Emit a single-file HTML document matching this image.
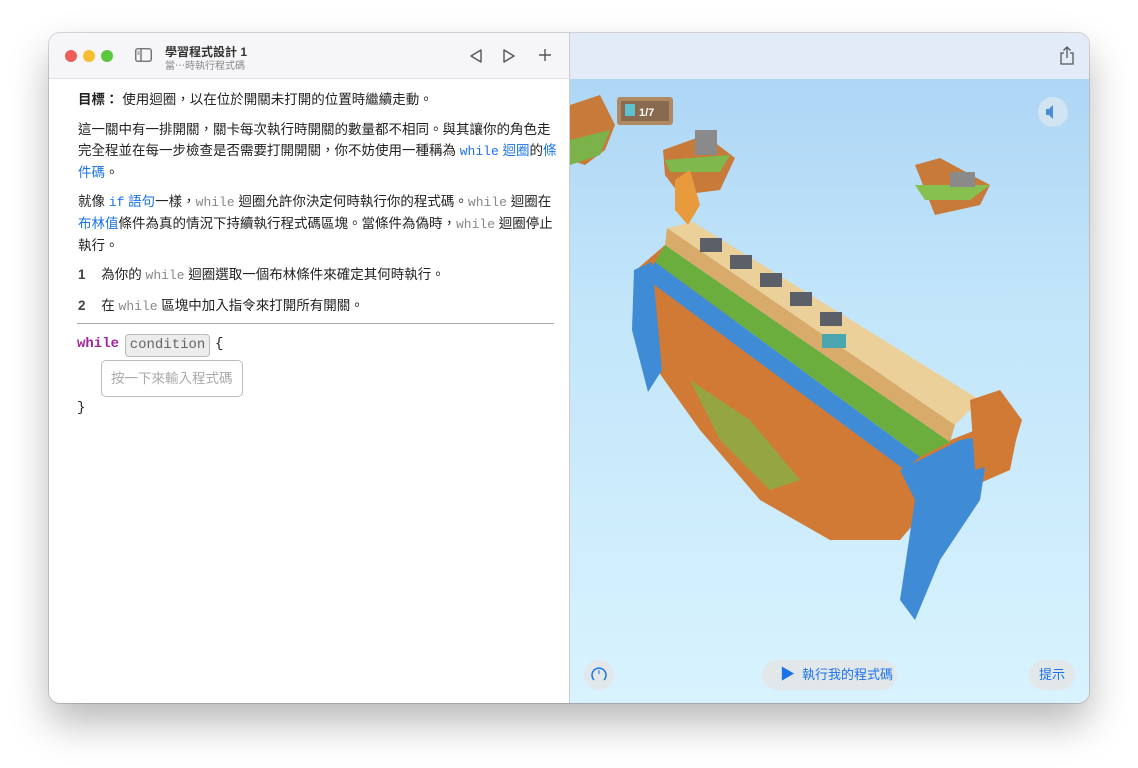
<!DOCTYPE html>
<html><head><meta charset="utf-8"><style>
*{margin:0;padding:0;box-sizing:border-box}
body{width:1138px;height:768px;background:#fff;position:relative;overflow:hidden;font-family:"Liberation Sans","Noto Sans CJK TC",sans-serif}
.win{position:absolute;left:49px;top:33px;width:1040px;height:670px;border-radius:11px;overflow:hidden;box-shadow:0 20px 40px rgba(0,0,0,.28),0 0 0 1px rgba(0,0,0,.15);background:#fff}
.tb{position:absolute;left:0;top:0;width:520px;height:46px;background:#f6f6f8;border-bottom:1px solid #e2e2e2}
.dot{position:absolute;top:17px;width:12px;height:12px;border-radius:50%}
.left{position:absolute;left:0;top:46px;width:520px;height:624px;background:#fff;font-size:13.5px;color:#222}
p{position:absolute;left:29px;width:490px;line-height:21px;white-space:nowrap}
.m{font-family:"Liberation Mono",monospace;color:#888;font-size:13px}
.b{color:#1a73e8}
.bm{font-family:"Liberation Mono",monospace;color:#1a73e8;font-size:13px}
.right{position:absolute;left:520px;top:0;width:520px;height:670px;background:linear-gradient(#a9d3f4 0%,#c2e5fa 40%,#d8f3fe 100%);border-left:1px solid #ccc}
.rtb{position:absolute;left:0;top:0;width:520px;height:46px;background:#e4ebf8}
.pill{position:absolute;background:#e2e7ea;border-radius:16px;color:#1a73e8;font-size:13px;text-align:center}
</style></head><body>
<div class="win">
<div class="tb">
<div class="dot" style="left:16px;background:#ee5f57"></div>
<div class="dot" style="left:34px;background:#f5bd2f"></div>
<div class="dot" style="left:52px;background:#5ec53e"></div>
<svg style="position:absolute;left:86px;top:15px" width="17" height="14"><rect x=".75" y=".75" width="15.5" height="12.5" rx="2" fill="none" stroke="#666" stroke-width="1.3"/><line x1="6" y1="1" x2="6" y2="13" stroke="#666" stroke-width="1.3"/><line x1="2.5" y1="4" x2="4.5" y2="4" stroke="#666"/><line x1="2.5" y1="6" x2="4.5" y2="6" stroke="#666"/></svg>
<div style="position:absolute;left:116px;top:10px;font-size:12px;font-weight:bold;color:#333">學習程式設計 1</div>
<div style="position:absolute;left:116px;top:24px;font-size:10px;color:#888">當⋯時執行程式碼</div>
<svg style="position:absolute;left:420px;top:15px" width="14" height="16"><path d="M12 2L2 8l10 6z" fill="none" stroke="#555" stroke-width="1.4" stroke-linejoin="round"/></svg>
<svg style="position:absolute;left:453px;top:15px" width="14" height="16"><path d="M2 2l10 6-10 6z" fill="none" stroke="#555" stroke-width="1.4" stroke-linejoin="round"/></svg>
<svg style="position:absolute;left:489px;top:15px" width="14" height="14"><path d="M7 1v12M1 7h12" stroke="#555" stroke-width="1.4"/></svg>
</div>
<div class="left">
<p style="top:10px"><b>目標：</b> 使用迴圈，以在位於開關未打開的位置時繼續走動。</p>
<p style="top:40px">這一關中有一排開關，關卡每次執行時開關的數量都不相同。與其讓你的角色走<br>完全程並在每一步檢查是否需要打開開關，你不妨使用一種稱為 <span class="bm">while</span><span class="b"> 迴圈</span>的<span class="b">條</span><br><span class="b">件碼</span>。</p>
<p style="top:112px">就像 <span class="bm">if</span><span class="b"> 語句</span>一樣，<span class="m">while</span> 迴圈允許你決定何時執行你的程式碼。<span class="m">while</span> 迴圈在<br><span class="b">布林值</span>條件為真的情況下持續執行程式碼區塊。當條件為偽時，<span class="m">while</span> 迴圈停止<br>執行。</p>
<p style="top:185px"><b style="color:#444;margin-right:12px">1</b> 為你的 <span class="m">while</span> 迴圈選取一個布林條件來確定其何時執行。</p>
<p style="top:216px"><b style="color:#444;margin-right:12px">2</b> 在 <span class="m">while</span> 區塊中加入指令來打開所有開關。</p>
<div style="position:absolute;left:28px;top:244px;width:477px;height:1px;background:#aaa"></div>
<div style="position:absolute;left:28px;top:257px;font-family:'Liberation Mono',monospace;font-size:14px;font-weight:bold;color:#a3269c">while</div>
<div style="position:absolute;left:76px;top:255px;width:85px;height:23px;border:1px solid #bbb;border-radius:4px;background:#ececec;font-family:'Liberation Mono',monospace;font-size:14px;color:#666;text-align:center;line-height:21px">condition</div>
<div style="position:absolute;left:166px;top:257px;font-family:'Liberation Mono',monospace;font-size:14px">{</div>
<div style="position:absolute;left:52px;top:281px;width:142px;height:37px;border:1px solid #bbb;border-radius:5px;font-size:13.5px;color:#aaa;line-height:35px;padding-left:9px">按一下來輸入程式碼</div>
<div style="position:absolute;left:28px;top:321px;font-family:'Liberation Mono',monospace;font-size:14px">}</div>
</div>
<div class="right">
<div class="rtb"></div>
<svg style="position:absolute;left:489px;top:13px" width="16" height="19"><path d="M8 1v11M4.5 4.5L8 1l3.5 3.5M5 7H2v11h12V7h-3" fill="none" stroke="#555" stroke-width="1.3"/></svg>
<svg style="position:absolute;left:0;top:46px" width="520" height="580" viewBox="0 79 520 580">
<path d="M0 105L30 95L45 125L35 150L15 165L0 160z" fill="#c87a3a"/>
<path d="M0 140L40 130L30 155L0 165z" fill="#7bb24a"/>
<rect x="47" y="97" width="56" height="28" rx="3" fill="#b08862"/>
<rect x="51" y="101" width="48" height="20" fill="#8a6a4e"/>
<rect x="55" y="104" width="10" height="12" fill="#5fc0d0"/>
<text x="69" y="116" font-size="11" fill="#fff" font-family="Liberation Sans" font-weight="bold">1/7</text>
<path d="M93 150L135 135L165 158L150 190L110 195L95 175z" fill="#c87a3a"/>
<path d="M95 160L160 155L150 172L100 172z" fill="#7fb84c"/>
<rect x="125" y="130" width="22" height="25" fill="#8a8a8a"/>
<path d="M345 165L370 158L420 185L410 205L365 215z" fill="#c87a3a"/>
<path d="M345 185L420 185L400 200L355 200z" fill="#88c050"/>
<rect x="380" y="172" width="25" height="15" fill="#8a8a8a"/>
<path d="M66 270L95 245L220 380L330 460L431 420L450 420L440 470L360 505L330 540L260 540L190 500L130 430L80 360L70 300z" fill="#d17a35"/>
<path d="M97 228L123 222L410 400L385 425z" fill="#ecd09a"/>
<path d="M97 228L385 425L380 442L95 245z" fill="#d9ab6b"/>
<path d="M95 245L380 442L350 457L85 262z" fill="#6cae3e"/>
<path d="M85 262L350 457L335 470L75 278z" fill="#3f8bd6"/>
<path d="M64 270L82 262L92 370L78 392L62 330z" fill="#3f8bd6"/>
<path d="M120 380L180 420L230 480L200 490L150 440z" fill="#7cb848" opacity=".7"/>
<path d="M330 470L390 440L420 435L410 500L370 560L345 620L330 600L345 500z" fill="#3f8bd6"/>
<path d="M400 400L430 390L452 420L440 460L405 470z" fill="#d17a35"/>
<g fill="#5b6068"><rect x="130" y="238" width="22" height="14"/><rect x="160" y="255" width="22" height="14"/><rect x="190" y="273" width="22" height="14"/><rect x="220" y="292" width="22" height="14"/><rect x="250" y="312" width="22" height="14"/></g>
<rect x="252" y="334" width="24" height="14" fill="#4aa7b0"/>
<path d="M105 180L120 170L130 205L118 225L105 210z" fill="#e89a3c"/>
<circle cx="483" cy="112" r="15" fill="#d0e4f2"/>
<path d="M476 109h3l4-4v14l-4-4h-3z" fill="#4a8cd8"/>
</svg>
<div class="pill" style="left:14px;top:627px;width:30px;height:30px;border-radius:50%"><svg width="30" height="30"><path d="M10 20a7 7 0 1 1 10 0" fill="none" stroke="#1a73e8" stroke-width="1.5"/><path d="M15 10v4" stroke="#1a73e8"/></svg></div>
<div class="pill" style="left:192px;top:627px;width:135px;height:30px;line-height:30px"><span style="position:absolute;left:18px;font-size:15px">▶</span><span style="position:absolute;left:40px">執行我的程式碼</span></div>
<div class="pill" style="left:459px;top:627px;width:46px;height:30px;line-height:30px">提示</div>
</div>
</div>
</body></html>
